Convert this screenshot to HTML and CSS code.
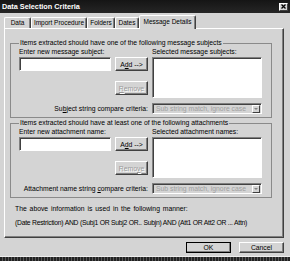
FILE: index.html
```html
<!DOCTYPE html>
<html lang="en">
<head>
  <meta charset="UTF-8" />
  <title>Data Selection Criteria</title>
  <link rel="stylesheet" href="styles.css">
</head>
<body>
  <div class="window">
    <div class="titlebar">
      <span class="title">Data Selection Criteria</span>
      <span class="close"><svg width="5" height="5" viewBox="0 0 5 5"><path d="M0.5 0.5L4.5 4.5M4.5 0.5L0.5 4.5" stroke="#000" stroke-width="1.3"/></svg></span>
    </div>

    <div class="tabs">
      <div class="tab t-data">Data</div>
      <div class="tab t-import">Import Procedure</div>
      <div class="tab t-folders">Folders</div>
      <div class="tab t-dates">Dates</div>
      <div class="tab active">Message Details</div>
    </div>

    <div class="panel">
      <fieldset class="group">
        <legend>Items extracted should have one of the following message subjects</legend>
        <div class="grid">
          <div class="lbl">Enter new message subject:</div>
          <div></div>
          <div class="lbl">Selected message subjects:</div>
          <div class="field"></div>
          <div class="btns">
            <button class="btn">A<u>d</u>d --&gt;</button>
            <button class="btn" disabled><u>R</u>emove</button>
          </div>
          <div class="listbox"></div>
          <div class="crit">Su<u>b</u>ject string compare criteria:</div>
          <div class="combo"><span class="combo-text">Sub string match, ignore case</span><span class="arrow"></span></div>
        </div>
      </fieldset>

      <fieldset class="group second">
        <legend>Items extracted should have at least one of the following attachments</legend>
        <div class="grid">
          <div class="lbl">Enter new attachment name:</div>
          <div></div>
          <div class="lbl">Selected attachment names:</div>
          <div class="field"></div>
          <div class="btns">
            <button class="btn">A<u>d</u>d --&gt;</button>
            <button class="btn" disabled>Remo<u>v</u>e</button>
          </div>
          <div class="listbox"></div>
          <div class="crit">Attachment name string <u>c</u>ompare criteria:</div>
          <div class="combo"><span class="combo-text">Sub string match, ignore case</span><span class="arrow"></span></div>
        </div>
      </fieldset>

      <p class="info">The above information is used in the following manner:</p>
      <p class="info formula">(Date Restriction) AND (Subj1 OR Subj2 OR.. Subjn) AND (Att1 OR Att2 OR ... Attn)</p>
    </div>

    <div class="actions">
      <button class="btn big default">OK</button>
      <button class="btn big">Cancel</button>
    </div>

    <div class="strip"></div>
  </div>
</body>
</html>
```

FILE: styles.css
```css
* {
  box-sizing: border-box;
}
body {
  margin: 0;
  width: 290px;
  height: 261px;
  overflow: hidden;
  background-color: #d4d4d4;
  font-family: "Liberation Sans", Arial, sans-serif;
  font-size: 6.8px;
  color: #000;
}
.window {
  display: flex;
  flex-direction: column;
  height: 261px;
}

/* title bar */
.titlebar {
  height: 13px;
  background: linear-gradient(#151515, #262626);
  display: flex;
  align-items: center;
  justify-content: space-between;
  padding: 0 2px 0 2px;
}
.title {
  color: #fff;
  font-weight: bold;
  font-size: 7.3px;
}
.close {
  width: 9px;
  height: 8px;
  background: #d4d4d4;
  border: 1px solid;
  border-color: #fff #404040 #404040 #fff;
  display: flex;
  align-items: center;
  justify-content: center;
}

/* tabs */
.tabs {
  height: 15px;
  display: flex;
  align-items: flex-end;
  padding-left: 4px;
  position: relative;
  z-index: 1;
}
.tab {
  height: 11px;
  line-height: 10px;
  font-size: 6.5px;
  white-space: nowrap;
  text-align: center;
  border: 1px solid;
  border-bottom: none;
  border-color: #fff #404040 transparent #fff;
  border-radius: 2px 2px 0 0;
  box-shadow: inset -1px 0 0 #808080;
}
.t-data { width: 27px; }
.t-import { width: 56px; }
.t-folders { width: 28px; }
.t-dates { width: 24px; }
.tab.active {
  width: 57px;
  height: 14px;
  line-height: 12px;
  margin-bottom: -1px;
  background: #d4d4d4;
}

/* tab page */
.panel {
  margin-left: 4px;
  width: 280px;
  height: 210px;
  border: 1px solid;
  border-color: #fff #404040 #404040 #fff;
  box-shadow: inset -1px -1px 0 #808080;
}
.group {
  margin: 10px 0 0 5px;
  width: 262px;
  padding: 0 8px 3px 8px;
  border: 1px solid #8a8a8a;
  min-width: 0;
}
.group.second {
  margin-top: 1px;
}
.group legend {
  padding: 0 1px;
  line-height: 8px;
}
.grid {
  display: grid;
  grid-template-columns: 92px 33px 110px;
  grid-template-rows: 10px 41px 16px;
  column-gap: 4px;
}
.lbl {
  line-height: 10px;
}
.field,
.listbox,
.combo {
  border: 1px solid;
  border-color: #808080 #fff #fff #808080;
  box-shadow: inset 1px 1px 0 #404040;
}
.field {
  height: 14px;
  background: #fff;
}
.listbox {
  background: #fff;
}
.btns {
  display: flex;
  flex-direction: column;
  gap: 10px;
}
.btn {
  font-family: inherit;
  font-size: 6.8px;
  color: #000;
  background: #d4d4d4;
  height: 14px;
  padding: 0;
  border: 1px solid;
  border-color: #fff #404040 #404040 #fff;
  box-shadow: inset -1px -1px 0 #808080;
}
.btn:disabled {
  color: #9a9a9a;
  text-shadow: 1px 1px 0 #fff;
}
.crit {
  grid-column: 1 / 3;
  align-self: end;
  text-align: right;
  line-height: 11px;
}
.combo {
  align-self: end;
  height: 11px;
  display: flex;
  align-items: center;
  justify-content: space-between;
  padding: 0 1px 0 3px;
  color: #a0a0a0;
}
.arrow {
  width: 8px;
  height: 8px;
  border: 1px solid;
  border-color: #fff #404040 #404040 #fff;
  display: flex;
  align-items: center;
  justify-content: center;
}
.arrow::before {
  content: '';
  border-left: 2px solid transparent;
  border-right: 2px solid transparent;
  border-top: 2px solid #808080;
}
.info {
  margin: 6px 0 0 0;
  padding-left: 10px;
  line-height: 10px;
  word-spacing: 1px;
  white-space: nowrap;
}
.info.formula {
  margin-top: 4px;
  word-spacing: 0;
  letter-spacing: -0.25px;
}

/* OK / Cancel */
.actions {
  display: flex;
  justify-content: flex-end;
  gap: 8px;
  padding-right: 6px;
  margin-top: 4px;
}
.btn.big {
  width: 45px;
  height: 11px;
  line-height: 9px;
}
.btn.default {
  outline: 1px solid #000;
  outline-offset: -1px;
}
.strip {
  margin-top: auto;
  height: 5px;
  border-top: 1px solid #eee;
  background: repeating-linear-gradient(90deg, #222 0 2px, #555 2px 3px);
}
```
